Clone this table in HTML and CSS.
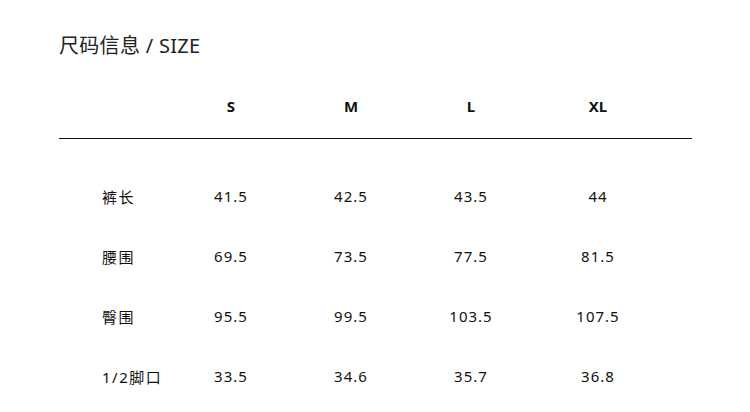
FILE: index.html
```html
<!DOCTYPE html>
<html lang="zh">
<head>
<meta charset="utf-8">
<link rel="stylesheet" href="styles.css">
</head>
<body>
<div class="page">
  <h1 class="title">尺码信息 / SIZE</h1>
  <div class="table">
    <div class="row head">
      <div class="label"></div>
      <div class="cell">S</div>
      <div class="cell">M</div>
      <div class="cell">L</div>
      <div class="cell">XL</div>
    </div>
    <div class="rule"></div>
    <div class="row body first">
      <div class="label">裤长</div>
      <div class="cell">41.5</div>
      <div class="cell">42.5</div>
      <div class="cell">43.5</div>
      <div class="cell">44</div>
    </div>
    <div class="row body">
      <div class="label">腰围</div>
      <div class="cell">69.5</div>
      <div class="cell">73.5</div>
      <div class="cell">77.5</div>
      <div class="cell">81.5</div>
    </div>
    <div class="row body">
      <div class="label">臀围</div>
      <div class="cell">95.5</div>
      <div class="cell">99.5</div>
      <div class="cell">103.5</div>
      <div class="cell">107.5</div>
    </div>
    <div class="row body">
      <div class="label">1/2脚口</div>
      <div class="cell">33.5</div>
      <div class="cell">34.6</div>
      <div class="cell">35.7</div>
      <div class="cell">36.8</div>
    </div>
  </div>
</div>
</body>
</html>
```
FILE: styles.css
```css
html, body {
  margin: 0;
  padding: 0;
  background: #ffffff;
}
body {
  width: 750px;
  height: 412px;
  overflow: hidden;
  font-family: "Noto Sans", "Noto Sans CJK SC", sans-serif;
  color: #111;
}
.page {
  padding: 32px 58px 0 59px;
}
.title {
  margin: 0;
  font-size: 20px;
  font-weight: 400;
  line-height: 28px;
  letter-spacing: 0.3px;
  color: #222;
}
.table {
  margin-top: 35px;
}
.row {
  display: grid;
  grid-template-columns: 112px 120px 120px 120px 134px 1fr;
  align-items: center;
}
.head {
  height: 22px;
  font-weight: 700;
  font-size: 15px;
}
.rule {
  margin-top: 21px;
  height: 1px;
  background: #111;
}
.body {
  height: 60px;
  font-size: 15px;
  letter-spacing: 1px;
}
.body.first {
  margin-top: 27px;
}
.label {
  padding-left: 43px;
  font-size: 15px;
  letter-spacing: 1.5px;
}
.cell {
  text-align: center;
}
```
